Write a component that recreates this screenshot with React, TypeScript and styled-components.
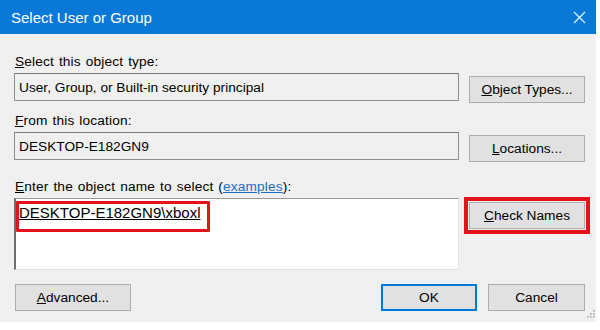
import React from "react";
import styled, { createGlobalStyle } from "styled-components";

const GlobalStyle = createGlobalStyle`
    html, body {
        margin: 0;
        padding: 0;
        background: #ffffff;
    }
    body {
        font-family: "Liberation Sans", Arial, sans-serif;
        font-size: 13.7px;
        color: #000000;
    }
`

const Dialog = styled.div`
    position: relative;
    width: 596px;
    height: 322px;
    background: #f0f0f0;
    display: flex;
    flex-direction: column;
`

const TitleBar = styled.div`
    height: 34px;
    flex-shrink: 0;
    background: #0a78d7;
    color: #ffffff;
    display: flex;
    align-items: center;
    justify-content: space-between;
    padding: 0 10px 0 11px;
    font-size: 15px;
`

const CloseIcon = styled.svg`
    width: 13px;
    height: 13px;
`

const Body = styled.div`
    display: flex;
    flex-direction: column;
    padding: 0 11px 0 14px;
`

const Section = styled.div<{ $top: number }>`
    display: flex;
    flex-direction: column;
    margin-top: ${({ $top }) => $top}px;
`

const Label = styled.div`
    height: 16px;
    line-height: 16px;
    padding-left: 1px;
    margin-bottom: 3px;
    letter-spacing: 0.15px;
    word-spacing: 1px;
`

const Row = styled.div`
    display: flex;
    align-items: flex-start;
    gap: 10px;
`

const Field = styled.div`
    flex: 1;
    height: 28px;
    box-sizing: border-box;
    border: 1px solid #8e8e8e;
    border-top-color: #7a7a7a;
    background: #f0f0f0;
    display: flex;
    align-items: center;
    padding-left: 4px;
`

const NameBox = styled.div`
    position: relative;
    flex: 1;
    height: 72px;
    box-sizing: border-box;
    background: #ffffff;
    border-top: 1px solid #9a9a9a;
    border-left: 2px solid #6e6e6e;
    border-right: 1px solid #e2e2e2;
    border-bottom: 1px solid #e2e2e2;
    padding: 6px 0 0 3px;
    line-height: 16px;
    font-size: 15px;
`

const Highlight = styled.div`
    position: absolute;
    left: 0;
    top: 2px;
    width: 194px;
    height: 31px;
    box-sizing: border-box;
    border: 3.5px solid #e3121b;
    border-radius: 1px;
`

const Button = styled.button<{ $width: number; $default?: boolean; $marked?: boolean }>`
    width: ${({ $width }) => $width}px;
    height: 27px;
    margin-top: ${({ $marked }) => ($marked ? 4 : 3)}px;
    flex-shrink: 0;
    box-sizing: border-box;
    background: #e1e1e1;
    border: 1px solid ${({ $default }) => ($default ? "#0078d7" : "#adadad")};
    box-shadow: ${({ $default }) => ($default ? "inset 0 0 0 1px #0078d7" : "none")};
    border-radius: 0;
    font-family: "Liberation Sans", Arial, sans-serif;
    font-size: 13.7px;
    color: #000000;
    padding: 0;
    outline: ${({ $marked }) => ($marked ? "4px solid #e3121b" : "none")};
    outline-offset: 1px;
`

const Link = styled.span`
    color: #1a6fc4;
    text-decoration: underline;
`

const Footer = styled.div`
    display: flex;
    align-items: center;
    gap: 11px;
    margin-top: 11px;
    padding-left: 1px;
`

const Spacer = styled.div`
    flex: 1;
`

const Grip = styled.svg`
    position: absolute;
    right: 1px;
    bottom: 4px;
    width: 10px;
    height: 10px;
`

export default function App() {
    return (
        <>
            <GlobalStyle />
            <Dialog>
                <TitleBar>
                    <span>Select User or Group</span>
                    <CloseIcon viewBox="0 0 13 13">
                        <path d="M1 1 L12 12 M12 1 L1 12" stroke="#dcefff" strokeWidth="1.4" fill="none" />
                    </CloseIcon>
                </TitleBar>
                <Body>
                    <Section $top={20}>
                        <Label><u>S</u>elect this object type:</Label>
                        <Row>
                            <Field>User, Group, or Built-in security principal</Field>
                            <Button $width={116}><u>O</u>bject Types...</Button>
                        </Row>
                    </Section>
                    <Section $top={10}>
                        <Label><u>F</u>rom this location:</Label>
                        <Row>
                            <Field>DESKTOP-E182GN9</Field>
                            <Button $width={116}><u>L</u>ocations...</Button>
                        </Row>
                    </Section>
                    <Section $top={17}>
                        <Label><u>E</u>nter the object name to select (<Link>examples</Link>):</Label>
                        <Row>
                            <NameBox>
                                <u>DESKTOP-E182GN9\xboxl</u>
                                <Highlight />
                            </NameBox>
                            <Button $width={116} $marked><u>C</u>heck Names</Button>
                        </Row>
                    </Section>
                    <Footer>
                        <Button $width={116}><u>A</u>dvanced...</Button>
                        <Spacer />
                        <Button $width={96} $default>OK</Button>
                        <Button $width={97}>Cancel</Button>
                    </Footer>
                </Body>
                <Grip viewBox="0 0 10 10">
                    {[[8, 2], [5, 5], [8, 5], [2, 8], [5, 8], [8, 8]].map(([x, y], i) => (
                        <rect key={i} x={x} y={y} width="1.6" height="1.6" fill="#a8a8a8" />
                    ))}
                </Grip>
            </Dialog>
        </>
    );
}
